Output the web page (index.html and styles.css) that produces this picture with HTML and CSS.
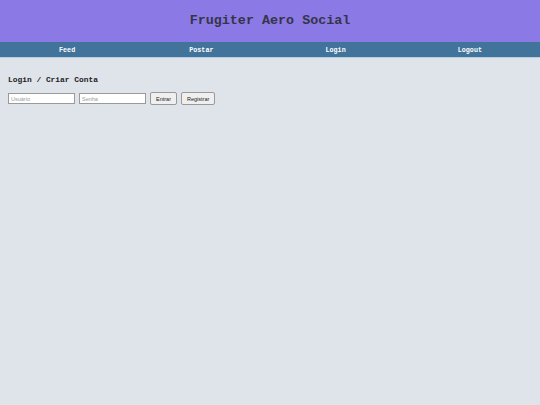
FILE: index.html
```html
<!DOCTYPE html>
<html lang="pt">
<head>
<meta charset="utf-8">
<title>Frugiter Aero Social</title>
<link rel="stylesheet" href="styles.css">
</head>
<body>
<header class="top">
  <h1 class="title">Frugiter Aero Social</h1>
</header>
<nav class="nav">
  <a class="nav-link" href="#">Feed</a>
  <a class="nav-link" href="#">Postar</a>
  <a class="nav-link" href="#">Login</a>
  <a class="nav-link" href="#">Logout</a>
</nav>
<main class="content">
  <h2 class="section-title">Login / Criar Conta</h2>
  <form class="login-form">
    <input class="field" type="text" placeholder="Usuário">
    <input class="field" type="password" placeholder="Senha">
    <button class="btn" type="button">Entrar</button>
    <button class="btn" type="button">Registrar</button>
  </form>
</main>
</body>
</html>
```
FILE: styles.css
```css
html, body {
  margin: 0;
  padding: 0;
}
body {
  background: #dfe3ea;
  font-family: "Liberation Mono", "Courier New", monospace;
  min-height: 405px;
}
.top {
  background: #8b79e6;
  height: 42px;
  display: flex;
  align-items: center;
  justify-content: center;
}
.title {
  margin: 0 0 2px 0;
  font-size: 13.4px;
  font-weight: bold;
  color: #353548;
}
.nav {
  background: #41739b;
  height: 15px;
  border-bottom: 1px solid #b9cde0;
  display: flex;
  align-items: center;
  padding-right: 3px;
}
.nav-link {
  flex: 1;
  text-align: center;
  color: #ffffff;
  text-decoration: none;
  font-size: 6.7px;
  font-weight: bold;
}
.content {
  padding: 17px 8px;
}
.section-title {
  margin: 0 0 8px 0;
  font-size: 7.9px;
  font-weight: bold;
  color: #222;
}
.login-form {
  display: flex;
  align-items: center;
  gap: 4px;
}
.field {
  box-sizing: border-box;
  width: 67px;
  height: 11px;
  padding: 0 2px;
  border: 1px solid #9a9a9a;
  background: #fff;
  font-family: "Liberation Sans", Arial, sans-serif;
  font-size: 5.5px;
}
.field::placeholder {
  color: #999;
}
.btn {
  box-sizing: border-box;
  height: 13px;
  padding: 0 5px;
  border: 1px solid #999;
  border-radius: 2px;
  background: #efefef;
  font-family: "Liberation Sans", Arial, sans-serif;
  font-size: 5.5px;
  color: #222;
}
```
